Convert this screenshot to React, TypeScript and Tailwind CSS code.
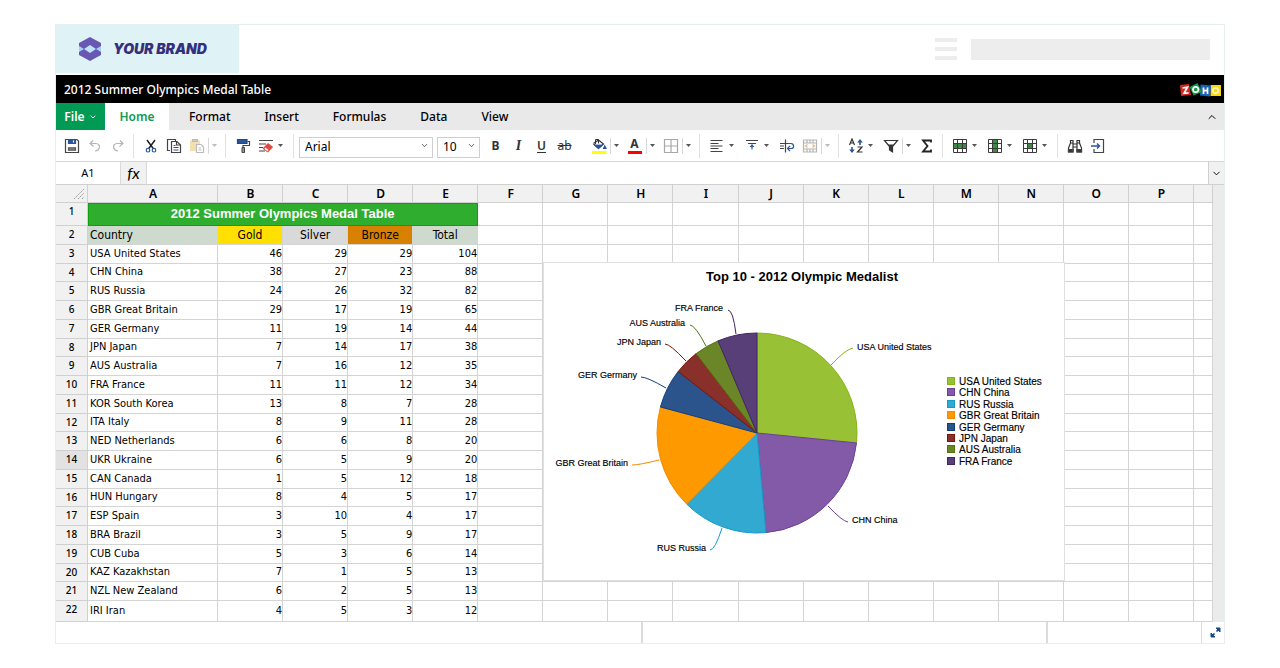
import type { ReactNode } from "react";
import { ChevronDown, ChevronUp } from "lucide-react";

const columns = "ABCDEFGHIJKLMNOP".split("");
const blanks = Array.from({ length: 12 }, (_, i) => i);

const medals: [string, number, number, number, number][] = [
  ["USA United States", 46, 29, 29, 104],
  ["CHN China", 38, 27, 23, 88],
  ["RUS Russia", 24, 26, 32, 82],
  ["GBR Great Britain", 29, 17, 19, 65],
  ["GER Germany", 11, 19, 14, 44],
  ["JPN Japan", 7, 14, 17, 38],
  ["AUS Australia", 7, 16, 12, 35],
  ["FRA France", 11, 11, 12, 34],
  ["KOR South Korea", 13, 8, 7, 28],
  ["ITA Italy", 8, 9, 11, 28],
  ["NED Netherlands", 6, 6, 8, 20],
  ["UKR Ukraine", 6, 5, 9, 20],
  ["CAN Canada", 1, 5, 12, 18],
  ["HUN Hungary", 8, 4, 5, 17],
  ["ESP Spain", 3, 10, 4, 17],
  ["BRA Brazil", 3, 5, 9, 17],
  ["CUB Cuba", 5, 3, 6, 14],
  ["KAZ Kazakhstan", 7, 1, 5, 13],
  ["NZL New Zealand", 6, 2, 5, 13],
  ["IRI Iran", 4, 5, 3, 12],
];

// label position and leader line of each pie slice
const slices = [
  { name: "USA United States", gold: 46, fill: "#99c135", stroke: "#84b414", x: 313, y: 87, anchor: "start", line: "M287 102Q302 86 309 85" },
  { name: "CHN China", gold: 38, fill: "#825aa8", stroke: "#6b3f98", x: 308, y: 260, anchor: "start", line: "M284 243Q298 258 304 259" },
  { name: "RUS Russia", gold: 24, fill: "#31a9d0", stroke: "#139ac8", x: 162, y: 288, anchor: "end", line: "M178 265Q171 287 166 287" },
  { name: "GBR Great Britain", gold: 29, fill: "#ff9900", stroke: "#f58a00", x: 84, y: 203, anchor: "end", line: "M115 197Q95 202 88 202" },
  { name: "GER Germany", gold: 11, fill: "#2a548b", stroke: "#123f7c", x: 93, y: 115, anchor: "end", line: "M122 125Q103 114 97 114" },
  { name: "JPN Japan", gold: 7, fill: "#8a302b", stroke: "#7a1508", x: 117, y: 82, anchor: "end", line: "M142 98Q126 81 121 81" },
  { name: "AUS Australia", gold: 7, fill: "#6a8628", stroke: "#54740c", x: 141, y: 63, anchor: "end", line: "M162 83Q151 62 146 62" },
  { name: "FRA France", gold: 11, fill: "#583f77", stroke: "#402562", x: 179, y: 48, anchor: "end", line: "M192 71Q189 47 184 47" },
] as const;

function PieChart() {
  const cx = 213;
  const cy = 170;
  const r = 100;
  const total = slices.reduce((sum, s) => sum + s.gold, 0);
  const point = (value: number) => {
    const a = (value / total) * Math.PI * 2;
    return `${(cx + r * Math.sin(a)).toFixed(2)} ${(cy - r * Math.cos(a)).toFixed(2)}`;
  };
  let start = 0;

  return (
    <svg width="520" height="317" viewBox="0 0 520 317" className="font-['Liberation_Sans',sans-serif]" role="img">
      <text x="258" y="18" textAnchor="middle" fontSize="13" fontWeight="700">
        Top 10 - 2012 Olympic Medalist
      </text>
      {slices.map((s) => {
        const from = start;
        start += s.gold;
        return (
          <g key={s.name}>
            <path d={`M${cx} ${cy}L${point(from)}A${r} ${r} 0 0 1 ${point(start)}Z`} fill={s.fill} stroke={s.stroke} />
            <path d={s.line} fill="none" stroke={s.stroke} />
            <text x={s.x} y={s.y} textAnchor={s.anchor} fontSize="9" stroke="#000" strokeWidth="0.15">
              {s.name}
            </text>
          </g>
        );
      })}
      {slices.map((s, i) => {
        const y = Math.round(114 + i * 11.4);
        return (
          <g key={s.name}>
            <rect x="403.5" y={y + 0.5} width="7" height="7" fill={s.fill} stroke={s.stroke} />
            <text x="415" y={y + 8} fontSize="10" stroke="#000" strokeWidth="0.15">
              {s.name}
            </text>
          </g>
        );
      })}
    </svg>
  );
}

function Icon({ children }: { children: ReactNode }) {
  return (
    <svg width="16" height="16" viewBox="0 0 16 16" fill="none" stroke="#444" strokeWidth="1.2">
      {children}
    </svg>
  );
}

function Caret({ faded }: { faded?: boolean }) {
  return (
    <svg width="5" height="3" viewBox="0 0 5 3">
      <path d="M0 0H5L2.5 3Z" fill={faded ? "#bbb" : "#555"} />
    </svg>
  );
}

function Tool({ label, children }: { label: string; children: ReactNode }) {
  return (
    <button type="button" aria-label={label} className="flex h-6 w-[23px] shrink-0 items-center justify-center">
      {children}
    </button>
  );
}

// icon with a divided drop-down arrow
function SplitTool({ label, faded, children }: { label: string; faded?: boolean; children: ReactNode }) {
  return (
    <div className="flex w-9 shrink-0 items-center">
      <Tool label={label}>{children}</Tool>
      <button
        type="button"
        aria-label={`${label} options`}
        className="flex h-4 w-[11px] items-center justify-center border-l border-[#d8d8d8]"
      >
        <Caret faded={faded} />
      </button>
    </div>
  );
}

function MenuTool({ label, children }: { label: string; children: ReactNode }) {
  return (
    <button type="button" aria-label={label} className="flex h-6 w-[35px] shrink-0 items-center">
      <span className="flex w-[23px] justify-center">{children}</span>
      <span className="flex w-[7px] justify-center">
        <Caret />
      </span>
    </button>
  );
}

function Separator() {
  return <div className="ml-1 mr-[5px] h-6 w-px shrink-0 bg-[#e2e2e2]" />;
}

function TableIcon({ children }: { children: ReactNode }) {
  return (
    <Icon>
      {children}
      <path d="M1.5 1.5H14.5V14.5H1.5ZM1.5 5.5H14.5M1.5 10.5H14.5M5.5 1.5V14.5M10.5 1.5V14.5" stroke="#3b3b3b" strokeWidth="1" />
    </Icon>
  );
}

function Toolbar() {
  return (
    <div className="flex h-8 items-center overflow-hidden border-b border-[#d6d6d6] pl-1">
      <Tool label="Save">
        <Icon>
          <path d="M1.5 1.5H13L14.5 3V14.5H1.5Z" />
          <path d="M4.5 2H11.5V5.5H4.5Z" fill="#2a5699" stroke="#2a5699" />
          <path d="M9.5 2.5V4.5" stroke="#fff" />
          <path d="M4.5 9.5H11.5V12.5H4.5Z" fill="#bbb" stroke="#777" />
          <path d="M4 11H12" />
        </Icon>
      </Tool>
      <Tool label="Undo">
        <Icon>
          <path d="M6 2.5L3 5.5L6.5 8.5M3.2 5.5H9C14 6 13.5 12 8 13" stroke="#b5b5b5" />
        </Icon>
      </Tool>
      <Tool label="Redo">
        <Icon>
          <path d="M10 2.5L13 5.5L9.5 8.5M12.8 5.5H7C2 6 2.5 12 8 13" stroke="#b5b5b5" />
        </Icon>
      </Tool>
      <Separator />
      <Tool label="Cut">
        <Icon>
          <path d="M4 2L10.2 10.5M12 2L5.8 10.5" stroke="#222" strokeWidth="1.5" />
          <circle cx="5" cy="12.2" r="1.8" stroke="#2a5699" />
          <circle cx="11" cy="12.2" r="1.8" stroke="#2a5699" />
        </Icon>
      </Tool>
      <Tool label="Copy">
        <Icon>
          <path d="M4 12.5H1.5V1.5H9.5V3" />
          <path d="M5.5 3.5H11L14.5 7V14.5H5.5Z" fill="#fff" />
          <path d="M10.5 3.5V7H14.5" />
          <path d="M7.5 7.5H9.5M7.5 9.5H12.5M7.5 12H12.5" stroke="#2a5699" />
        </Icon>
      </Tool>
      <SplitTool label="Paste" faded>
        <Icon>
          <path d="M1 2.5H11V13H1Z" fill="#f4dfae" stroke="none" />
          <path d="M3.5 3V1.5H8.5V3.5H3.5Z" fill="#ccc" stroke="#bbb" />
          <path d="M7.5 6.5H12L14.5 9V14.5H7.5Z" fill="#fff" stroke="#bbb" />
          <path d="M9.5 10H12M9.5 12H12.5" stroke="#bbb" />
        </Icon>
      </SplitTool>
      <Separator />
      <Tool label="Format painter">
        <Icon>
          <path d="M2.5 1.5H12V5.5H2.5Z" fill="#2a5699" stroke="#24497f" />
          <path d="M12.5 3.5H14.5V7.5H8V9.5" />
          <path d="M7 9.5H9.5V14.5H7Z" fill="#999" stroke="#444" strokeWidth="1" />
        </Icon>
      </Tool>
      <MenuTool label="Clear">
        <Icon>
          <path d="M1 2.5H15M1 6H8M1 9.5H5M1 13H7" />
          <path d="M4.5 10.5L10 5L15.2 9L9.8 14.5Z" fill="#e5483d" stroke="none" />
          <path d="M7.5 9.3L5.8 11L9.5 13.6L11.2 12Z" fill="#fff" stroke="#e5483d" strokeWidth="0.8" />
        </Icon>
      </MenuTool>
      <Separator />
      <div className="relative">
        <select aria-label="Font" className="h-[21px] w-[134px] appearance-none border border-[#cfcfcf] bg-white pb-px pl-[5px] text-xs leading-4">
          <option>Arial</option>
        </select>
        <ChevronDown size={9} className="pointer-events-none absolute top-2 right-1 text-[#333]" />
      </div>
      <div className="relative ml-1">
        <select aria-label="Font size" className="h-[21px] w-[43px] appearance-none border border-[#cfcfcf] bg-white pb-px pl-[5px] text-xs leading-4">
          <option>10</option>
        </select>
        <ChevronDown size={9} className="pointer-events-none absolute top-2 right-1 text-[#333]" />
      </div>
      <div className="ml-1 mr-[11px] flex text-xs text-[#333]">
        <Tool label="Bold">
          <b>B</b>
        </Tool>
        <Tool label="Italic">
          <i className="font-['Liberation_Serif',serif] text-sm font-bold">I</i>
        </Tool>
        <Tool label="Underline">
          <span className="font-semibold underline underline-offset-2">U</span>
        </Tool>
        <Tool label="Strikethrough">
          <span className="line-through">ab</span>
        </Tool>
      </div>
      <SplitTool label="Fill color">
        <Icon>
          <path d="M2.5 5.5L7.5 2L12.5 6L7.5 10.5L2.5 6" stroke="#333" />
          <path d="M3.5 7H11.5L7.5 10.5Z" fill="#2a5699" stroke="#2a5699" strokeWidth="0.8" />
          <path d="M4.5 6V1.5H7.5V5.5" stroke="#333" strokeWidth="1" />
          <path d="M13.8 8L15 10.5H12.6Z" fill="#2a5699" stroke="#2a5699" />
          <path d="M1 14.5H15.5" stroke="#ff0" strokeWidth="3" />
        </Icon>
      </SplitTool>
      <SplitTool label="Text color">
        <span className="flex w-3.5 flex-col items-center border-b-[3px] border-[#f00] text-xs leading-[14px] font-bold text-[#333]">A</span>
      </SplitTool>
      <SplitTool label="Borders">
        <Icon>
          <path d="M1.5 1.5H14.5V14.5H1.5ZM1.5 8H14.5M8 1.5V14.5" stroke="#a8a8a8" />
        </Icon>
      </SplitTool>
      <Separator />
      <MenuTool label="Horizontal align">
        <Icon>
          <path d="M1.5 2.5H13.5M1.5 5.5H9.5M1.5 8H13.5M1.5 10.5H9.5M1.5 13.5H13.5" />
        </Icon>
      </MenuTool>
      <MenuTool label="Vertical align">
        <Icon>
          <path d="M2 2.5H14M4 5.5H12" />
          <path d="M8 6.5V11.5" stroke="#2a5699" />
          <path d="M5.5 9L8 6.5L10.5 9Z" fill="#2a5699" stroke="none" />
        </Icon>
      </MenuTool>
      <Tool label="Wrap text">
        <Icon>
          <path d="M1 5.5H9M1 8H5M1 10.5H5M6.5 1.5V14.5" />
          <path d="M9 5.5H12C15.5 6 15.5 10.5 12 10.5H9" stroke="#2a5699" />
          <path d="M11 8L8.5 10.5L11 13" stroke="#2a5699" />
        </Icon>
      </Tool>
      <SplitTool label="Merge cells" faded>
        <Icon>
          <path d="M1.5 2H14.5V14H1.5ZM1.5 5H14.5M1.5 11H14.5M5 2V5M8 2V5M11 2V5M5 11V14M8 11V14M11 11V14" stroke="#b5b5b5" />
          <path d="M5.5 6.5L3.5 8L5.5 9.5M10.5 6.5L12.5 8L10.5 9.5" stroke="#e3b57c" />
        </Icon>
      </SplitTool>
      <Separator />
      <MenuTool label="Sort">
        <Icon>
          <path d="M1.5 7L4 1L6.5 7M2.5 5H5.5M9.5 9H14L9.5 14H14.5" stroke="#333" />
          <path d="M12 7V2M4 9V14" stroke="#2a5699" strokeWidth="1.6" />
          <path d="M9.2 4.5L12 1L14.8 4.5ZM1.2 11.5L4 15L6.8 11.5Z" fill="#2a5699" stroke="none" />
        </Icon>
      </MenuTool>
      <SplitTool label="Filter">
        <Icon>
          <path d="M1.5 2.5H14.5L9.5 8.5V14L6.5 12V8.5Z" stroke="#333" />
          <path d="M5 6.5H11L9.2 8.5V13.5L6.8 12V8.5Z" fill="#333" stroke="none" />
        </Icon>
      </SplitTool>
      <Tool label="Sum">
        <Icon>
          <path d="M12 4.5V2.5H4L8.5 8L4 13.5H12V11.5" stroke="#222" strokeWidth="1.8" />
        </Icon>
      </Tool>
      <Separator />
      <MenuTool label="Rows">
        <TableIcon>
          <path d="M1.5 5.5H14.5V10.5H1.5Z" fill="#3f8a45" stroke="none" />
        </TableIcon>
      </MenuTool>
      <MenuTool label="Columns">
        <TableIcon>
          <path d="M5.5 1.5H10.5V14.5H5.5Z" fill="#3f8a45" stroke="none" />
        </TableIcon>
      </MenuTool>
      <MenuTool label="Cells">
        <TableIcon>
          <path d="M5.5 5.5H10.5V10.5H5.5Z" fill="#3f8a45" stroke="none" />
        </TableIcon>
      </MenuTool>
      <Separator />
      <Tool label="Find">
        <Icon>
          <path d="M3.5 5L1.5 10V14H6V5ZM12.5 5L14.5 10V14H10V5ZM6 6H10V9H6M3.5 5V2.5H6V5M12.5 5V2.5H10V5" stroke="#333" />
          <path d="M1.5 11.5H6V14H1.5ZM10 11.5H14.5V14H10Z" fill="#333" />
        </Icon>
      </Tool>
      <Tool label="Go to">
        <Icon>
          <path d="M4 5V1.5H13.5V14.5H4V11" />
          <path d="M1 8H9.5M7 5.5L9.5 8L7 10.5" stroke="#2a5699" strokeWidth="1.4" />
        </Icon>
      </Tool>
    </div>
  );
}

function Brand() {
  return (
    <header className="flex h-[50px] items-start justify-between">
      <div className="flex h-12 w-[183px] items-center bg-[#dff3f6] pl-[23px]">
        <svg width="22" height="24" viewBox="0 0 22 24">
          <path d="M0 8H22V16H0Z" fill="#a3d2f8" />
          <path d="M11 7L17 12L11 17L5 12Z" fill="#c0e2fb" />
          <path d="M0 6L11 0L22 6V9L17 12L11 8L5 12L0 9Z" fill="#6858b3" />
          <path d="M0 18L11 24L22 18V15L17 12L11 16L5 12L0 15Z" fill="#6858b3" />
        </svg>
        <span className="ml-3 font-['Inter',sans-serif] text-sm font-black whitespace-nowrap text-[#35307d] italic">YOUR BRAND</span>
      </div>
      <div className="mr-3.5 flex items-center gap-3.5 pt-[13px]">
        <div className="flex w-[22px] flex-col gap-[5px]">
          <div className="h-1 bg-[#ededed]" />
          <div className="h-1 bg-[#ededed]" />
          <div className="h-1 bg-[#ededed]" />
        </div>
        <div className="h-[21px] w-[239px] bg-[#ededed]" />
      </div>
    </header>
  );
}

function ZohoLogo() {
  return (
    <svg width="41" height="14" viewBox="0 0 41 14" fill="none" stroke="#fff" strokeWidth="1.7">
      <path d="M0 2L9 1L11 12L1 13Z" fill="#d5281f" stroke="none" />
      <path d="M2.5 5L7.5 4.2L4 10.3L8.5 9.8" />
      <path d="M30.5 2H41V13H30.5Z" fill="#fbd80b" stroke="none" />
      <path d="M20.5 1.5L31 2.5L30 13.5L20 12.5Z" fill="#1d62b5" stroke="none" />
      <path d="M9.5 4L17.5 0L22 9L13.5 12.5Z" fill="#159a45" stroke="none" />
      <circle cx="15.7" cy="6.5" r="2.7" />
      <path d="M23.5 4.5V11M27.5 4.5V11M23.5 7.7H27.5" />
      <circle cx="35.6" cy="7.6" r="2.7" stroke="#fff6b8" />
    </svg>
  );
}

function Sheet() {
  return (
    <table className="h-[437px] w-full table-fixed border-separate border-spacing-0 font-['DejaVu_Sans_Condensed','DejaVu_Sans',sans-serif] text-[11px] leading-4 [&_td]:border-r [&_td]:border-b [&_td]:border-[#d4d4d4] [&_th]:border-r [&_th]:border-b [&_th]:border-[#d0d0d0]">
      <colgroup>
        <col className="w-8" />
        <col className="w-[130px]" />
        {columns.slice(1).map((c) => (
          <col key={c} />
        ))}
        <col className="w-[19px]" />
      </colgroup>
      <thead className="bg-[#f1f1f1] font-['Noto_Sans',sans-serif] text-xs leading-4">
        <tr className="h-[18px]">
          <th className="p-0">
            <svg width="12" height="10" viewBox="0 0 12 10" className="mr-0.5 ml-auto" stroke="#999" strokeDasharray="2 1">
              <path d="M1 10L11 0M5 10L11 4M9 10L11 8" />
            </svg>
          </th>
          {columns.map((c) => (
            <th key={c} scope="col" className="p-0 pl-px font-semibold">
              {c}
            </th>
          ))}
          <th className="p-0" />
        </tr>
      </thead>
      <tbody>
        <tr className="h-[23px]">
          <RowHeader n={1} />
          <td
            colSpan={5}
            className="bg-[#2fad2f] p-0 text-center font-['Liberation_Sans',sans-serif] text-[13px] font-bold text-white outline-1 -outline-offset-1 outline-[#0da10d]"
          >
            2012 Summer Olympics Medal Table
          </td>
          <Blanks />
        </tr>
        <tr className="text-center text-xs leading-4">
          <RowHeader n={2} />
          <td className="bg-[#cddacd] py-0 pr-0 pl-0.5 text-left">Country</td>
          <td className="bg-[#ffe000] p-0">Gold</td>
          <td className="bg-[#d9d9d9] p-0">Silver</td>
          <td className="bg-[#d88100] p-0">Bronze</td>
          <td className="bg-[#cddacd] p-0">Total</td>
          <Blanks />
        </tr>
        {medals.map(([country, ...counts], i) => (
          <tr key={country} className="last:h-[21px]">
            <RowHeader n={i + 3} />
            <td className="py-0 pr-0 pl-0.5 whitespace-nowrap">{country}</td>
            {counts.map((count, j) => (
              <td key={j} className="p-0 text-right">
                {count}
              </td>
            ))}
            <Blanks />
          </tr>
        ))}
      </tbody>
    </table>
  );
}

function RowHeader({ n }: { n: number }) {
  return (
    <th
      scope="row"
      className={`p-0 align-top font-['Noto_Sans',sans-serif] text-[10px] leading-4 font-medium ${n === 14 ? "bg-[#e2e2e2]" : "bg-[#f1f1f1]"}`}
    >
      {n}
    </th>
  );
}

function Blanks() {
  return (
    <>
      {blanks.map((b) => (
        <td key={b} className="p-0" />
      ))}
    </>
  );
}

export default function App() {
  return (
    <div className="min-h-screen bg-white pt-6 font-['Noto_Sans',sans-serif] text-black">
      <div className="mx-[55px] border border-[#e6eef0]">
        <Brand />
        <div className="flex h-7 items-center justify-between bg-black pt-px pr-[3px] pl-2">
          <h1 className="text-xs font-medium text-white">2012 Summer Olympics Medal Table</h1>
          <ZohoLogo />
        </div>

        {/* Menu */}
        <nav className="flex h-[27px] items-stretch bg-[#e9e9e9] text-xs font-medium">
          <button type="button" className="flex w-[49px] items-center justify-center gap-1 bg-[#009a54] font-semibold text-white">
            File
            <ChevronDown size={8} strokeWidth={3} />
          </button>
          <button type="button" className="mr-[3px] w-16 bg-white font-semibold text-[#109a55]">
            Home
          </button>
          {["Format", "Insert", "Formulas", "Data", "View"].map((item) => (
            <button key={item} type="button" className="px-[17px]">
              {item}
            </button>
          ))}
          <button type="button" aria-label="Collapse" className="ml-auto px-1.5">
            <ChevronUp size={12} />
          </button>
        </nav>

        <Toolbar />

        {/* Formula bar */}
        <div className="flex h-[23px] border-b border-[#d0d0d0] text-[11px]">
          <input aria-label="Cell" defaultValue="A1" className="w-16 text-center" />
          <div className="flex w-[27px] items-center justify-center border-x border-[#d9d9d9] bg-[#f1f1f1] font-['Lato',sans-serif] text-base italic">
            fx
          </div>
          <input aria-label="Formula" className="min-w-0 flex-1" />
          <button type="button" aria-label="Expand formula bar" className="flex w-4 items-center justify-center border-l border-[#d0d0d0] bg-[#f1f1f1]">
            <ChevronDown size={11} />
          </button>
        </div>

        <div className="relative flex">
          <div className="min-w-0 flex-1">
            <Sheet />
          </div>
          <div className="w-[11px] bg-[#ebebeb]" />
          <div className="absolute top-[77px] left-[487px] overflow-hidden border border-[#e0e0e0] bg-white">
            <PieChart />
          </div>
        </div>

        {/* Status bar */}
        <footer className="flex h-[21px]">
          <div className="flex-1 border-r-2 border-[#dcdcdc]" />
          <div className="w-[405px] border-r-2 border-[#dcdcdc]" />
          <div className="w-[154px] border-r border-[#dcdcdc]" />
          <button type="button" aria-label="Full screen" className="flex w-[22px] items-center justify-center pl-1">
            <svg width="11" height="11" viewBox="0 0 11 11" fill="#1b4a8a" stroke="#1b4a8a">
              <path d="M6 1H10V5ZM1 6V10H5Z" />
              <path d="M6.5 4.5L9 2M4.5 6.5L2 9" strokeWidth="1.6" />
            </svg>
          </button>
        </footer>
      </div>
    </div>
  );
}
